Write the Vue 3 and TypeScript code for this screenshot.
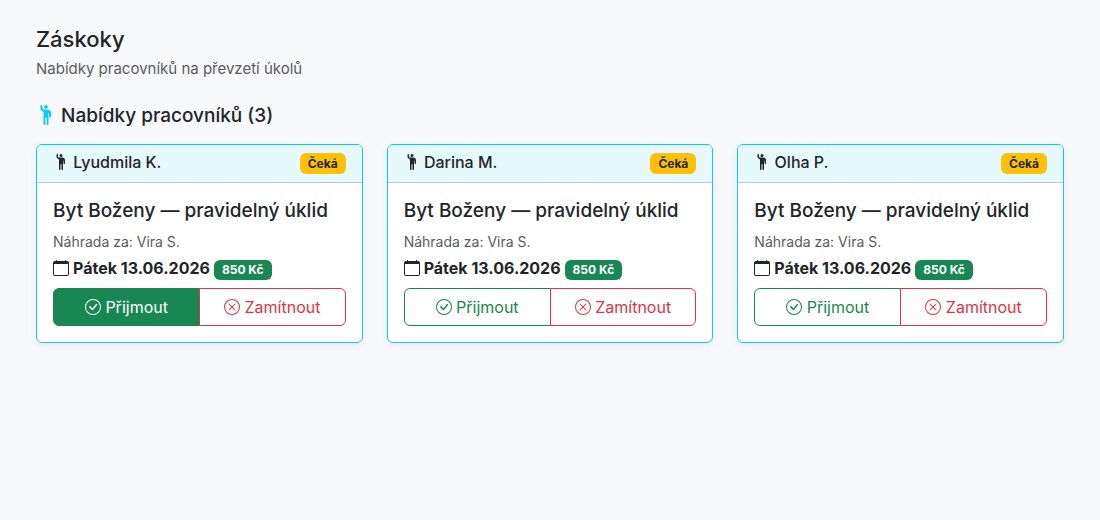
<script setup lang="ts">
interface Offer {
  id: number
  worker: string
  task: string
  replaces: string
  date: string
  reward: string
  accepting: boolean
}

const base = {
  task: 'Byt Boženy — pravidelný úklid',
  replaces: 'Vira S.',
  date: 'Pátek 13.06.2026',
  reward: '850 Kč',
}

const offers: Offer[] = [
  { id: 1, worker: 'Lyudmila K.', accepting: true, ...base },
  { id: 2, worker: 'Darina M.', accepting: false, ...base },
  { id: 3, worker: 'Olha P.', accepting: false, ...base },
]

const circle = 'M8 15A7 7 0 1 1 8 1a7 7 0 0 1 0 14m0 1A8 8 0 1 0 8 0a8 8 0 0 0 0 16'
const person =
  'M6 6.207v9.043a.75.75 0 0 0 1.5 0V10.5a.5.5 0 0 1 1 0v4.75a.75.75 0 0 0 1.5 0v-8.5a.25.25 0 1 1 .5 0v2.5a.75.75 0 0 0 1.5 0V6.5a3 3 0 0 0-3-3H6.236a1 1 0 0 1-.447-.106l-.33-.165A.83.83 0 0 1 5 2.488V.75a.75.75 0 0 0-1.5 0v2.083c0 .715.404 1.37 1.044 1.689L5.5 5c.32.32.5.754.5 1.207M8 3a1.5 1.5 0 1 0 0-3 1.5 1.5 0 0 0 0 3'
</script>

<template>
  <main class="page">
    <h1>Záskoky</h1>
    <p class="lead">Nabídky pracovníků na převzetí úkolů</p>
    <h2>
      <svg class="icon info" viewBox="0 0 16 16" aria-hidden="true"><path :d="person" /></svg>
      Nabídky pracovníků ({{ offers.length }})
    </h2>
    <div class="grid">
      <article v-for="offer in offers" :key="offer.id" class="card">
        <header>
          <span class="worker">
            <svg class="icon" viewBox="0 0 16 16" aria-hidden="true"><path :d="person" /></svg>
            {{ offer.worker }}
          </span>
          <span class="badge waiting">Čeká</span>
        </header>
        <div class="body">
          <h3>{{ offer.task }}</h3>
          <p class="replaces">Náhrada za: {{ offer.replaces }}</p>
          <p class="date">
            <svg class="icon" viewBox="0 0 16 16" aria-hidden="true">
              <path d="M3.5 0a.5.5 0 0 1 .5.5V1h8V.5a.5.5 0 0 1 1 0V1h1a2 2 0 0 1 2 2v11a2 2 0 0 1-2 2H2a2 2 0 0 1-2-2V3a2 2 0 0 1 2-2h1V.5a.5.5 0 0 1 .5-.5M1 4v10a1 1 0 0 0 1 1h12a1 1 0 0 0 1-1V4z" />
            </svg>
            <strong>{{ offer.date }}</strong>
            <span class="badge reward">{{ offer.reward }}</span>
          </p>
          <div class="actions">
            <button type="button" class="accept" :class="{ active: offer.accepting }">
              <svg class="icon" viewBox="0 0 16 16" aria-hidden="true">
                <path :d="circle" />
                <path d="M10.97 4.97a.235.235 0 0 0-.02.022L7.477 9.417 5.384 7.323a.75.75 0 0 0-1.06 1.06L6.97 11.03a.75.75 0 0 0 1.079-.02l3.992-4.99a.75.75 0 0 0-1.071-1.05" />
              </svg>
              Přijmout
            </button>
            <button type="button" class="reject">
              <svg class="icon" viewBox="0 0 16 16" aria-hidden="true">
                <path :d="circle" />
                <path d="M4.646 4.646a.5.5 0 0 1 .708 0L8 7.293l2.646-2.647a.5.5 0 0 1 .708.708L8.707 8l2.647 2.646a.5.5 0 0 1-.708.708L8 8.707l-2.646 2.647a.5.5 0 0 1-.708-.708L7.293 8 4.646 5.354a.5.5 0 0 1 0-.708" />
              </svg>
              Zamítnout
            </button>
          </div>
        </div>
      </article>
    </div>
  </main>
</template>

<style>
body {
  margin: 0;
  background: #f8f9fb;
}
</style>

<style scoped>
* {
  box-sizing: border-box;
}
.page {
  padding: 24px 36px;
  color: #212529;
  font: 16px/24px Inter, 'Liberation Sans', sans-serif;
}
h1,
h2,
h3,
p {
  margin: 0;
}
h1,
h2,
h3 {
  font-weight: 500;
}
h1 {
  font-size: 22px;
  line-height: 30px;
  margin-bottom: 2px;
}
h2,
h3 {
  font-size: 19px;
  line-height: 24px;
}
.lead {
  font-size: 15px;
  line-height: 26px;
  color: #595c5f;
  margin-bottom: 22px;
}
h2 {
  margin-bottom: 16px;
}
.icon {
  width: 16px;
  height: 16px;
  fill: currentColor;
  vertical-align: -2px;
}
.icon.info {
  width: 20px;
  height: 20px;
  color: #0dcaf0;
  vertical-align: -3px;
}
.grid {
  display: grid;
  grid-template-columns: repeat(3, 1fr);
  gap: 24px;
}
.card {
  background: #fff;
  border: 1px solid #0dcaf0;
  border-radius: 6px;
  box-shadow: 0 2px 8px rgba(0, 0, 0, 0.06);
}
header {
  display: flex;
  justify-content: space-between;
  align-items: flex-start;
  padding: 8px 16px;
  border-bottom: 1px solid rgba(0, 0, 0, 0.175);
  border-radius: 5px 5px 0 0;
  background: #e6f9fd;
}
.worker {
  font-weight: 500;
  line-height: 19px;
}
.badge {
  display: inline-block;
  padding: 4px 8px;
  border-radius: 6px;
  font-size: 12px;
  line-height: 12px;
  font-weight: 700;
}
.waiting {
  background: #ffc107;
  line-height: 13px;
}
.reward {
  background: #198754;
  color: #fff;
}
.body {
  padding: 16px;
}
h3 {
  margin-bottom: 8px;
}
.replaces {
  font-size: 14px;
  line-height: 21px;
  color: #595c5f;
  margin-bottom: 4px;
}
.date {
  margin-bottom: 8px;
}
strong {
  margin: 0 4px;
  font-weight: 700;
}
.actions {
  display: flex;
}
button {
  flex: 1;
  height: 38px;
  padding: 0 12px;
  border: 1px solid;
  background: transparent;
  font: inherit;
  cursor: pointer;
}
.accept {
  color: #198754;
  border-color: #198754;
  border-radius: 6px 0 0 6px;
}
.accept.active {
  background: #198754;
  color: #fff;
}
.reject {
  color: #dc3545;
  border-color: #dc3545;
  border-radius: 0 6px 6px 0;
  margin-left: -1px;
}
</style>
